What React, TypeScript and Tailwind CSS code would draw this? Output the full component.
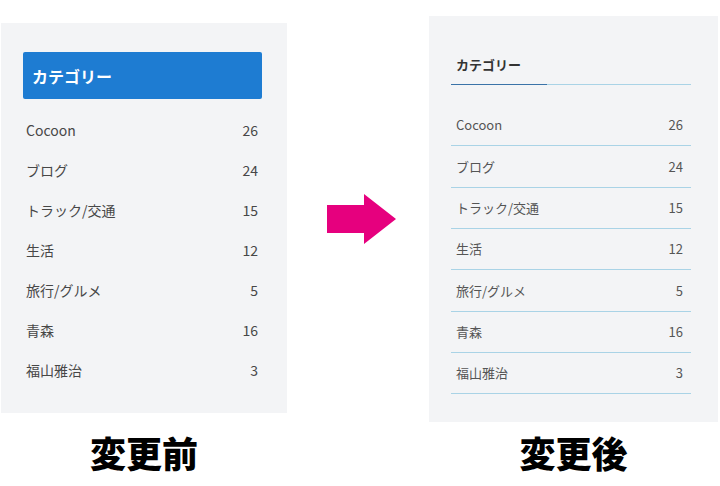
import React from 'react';

// ─── Data ─────────────────────────────────────────────────────
const CATEGORIES = [
  { name: 'Cocoon', count: 26 },
  { name: 'ブログ', count: 24 },
  { name: 'トラック/交通', count: 15 },
  { name: '生活', count: 12 },
  { name: '旅行/グルメ', count: 5 },
  { name: '青森', count: 16 },
  { name: '福山雅治', count: 3 },
];

const FONT = { fontFamily: '"Noto Sans CJK JP", "Noto Sans", sans-serif' };

// ─── Before: blue header widget ───────────────────────────────
const BeforeWidget = () => (
  <div className="h-[390px] bg-[#f3f4f6] pt-[29px] pl-[22px] pr-[25px]">
    <div className="h-[47px] bg-[#1e7cd2] rounded-[2px] flex items-center pl-[9px]">
      <span className="text-[16px] font-bold text-white">カテゴリー</span>
    </div>
    <ul className="mt-[11px]">
      {CATEGORIES.map((c) => (
        <li
          key={c.name}
          className="h-[40px] flex items-center justify-between pl-[3px] pr-[4px] text-[14px] text-[#474747]"
        >
          <span>{c.name}</span>
          <span>{c.count}</span>
        </li>
      ))}
    </ul>
  </div>
);

// ─── After: underlined header widget ──────────────────────────
const AfterWidget = () => (
  <div className="h-[406px] bg-[#f3f4f6] pt-[39px] pl-[22px] pr-[27px]">
    <div className="pl-[5px] h-[20px] flex items-center">
      <span className="text-[13px] font-bold text-[#333]">カテゴリー</span>
    </div>
    <div className="mt-[9px] flex h-px">
      <div className="w-[96px] bg-[#3a73a8]" />
      <div className="flex-1 bg-[#a9d3e6]" />
    </div>
    <ul className="mt-[20px]">
      {CATEGORIES.map((c) => (
        <li
          key={c.name}
          className="h-[41.33px] box-border border-b border-[#a9d3e6] flex items-center justify-between pl-[5px] pr-[8px] text-[13px] text-[#555]"
        >
          <span>{c.name}</span>
          <span>{c.count}</span>
        </li>
      ))}
    </ul>
  </div>
);

const Arrow = () => (
  <svg width="69" height="50" viewBox="0 0 69 50">
    <polygon points="0,11 37,11 37,0 69,25 37,50 37,39 0,39" fill="#e6007e" />
  </svg>
);

export default function App() {
  return (
    <div className="w-[720px] h-[486px] bg-white flex items-start overflow-hidden" style={FONT}>
      <div className="ml-[1px] w-[286px] pt-[23px] flex flex-col">
        <BeforeWidget />
        <p className="mt-[21px] text-center text-[36px] leading-[36px] font-black text-black">変更前</p>
      </div>
      <div className="ml-[40px] mt-[194px] flex">
        <Arrow />
      </div>
      <div className="ml-[33px] w-[289px] pt-[16px] flex flex-col">
        <AfterWidget />
        <p className="mt-[12px] text-center text-[36px] leading-[36px] font-black text-black">変更後</p>
      </div>
    </div>
  );
}
